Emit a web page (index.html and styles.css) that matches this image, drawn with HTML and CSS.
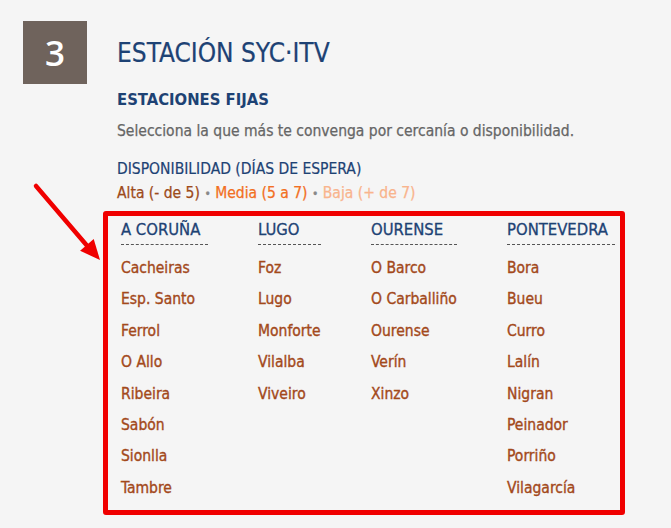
FILE: index.html
```html
<!DOCTYPE html>
<html lang="es">
<head>
<meta charset="utf-8">
<link rel="stylesheet" href="styles.css">
</head>
<body>
<div class="page">
  <div class="step">3</div>
  <div class="content">
    <h1 class="title">ESTACIÓN SYC·ITV</h1>
    <h2 class="subtitle">ESTACIONES FIJAS</h2>
    <p class="lead">Selecciona la que más te convenga por cercanía o disponibilidad.</p>
    <p class="avail-title">DISPONIBILIDAD (DÍAS DE ESPERA)</p>
    <p class="legend"><span class="alta">Alta (- de 5)</span> <span class="dot">•</span> <span class="media">Media (5 a 7)</span> <span class="dot">•</span> <span class="baja">Baja (+ de 7)</span></p>
    <div class="stations">
      <div class="col">
        <div class="head">A CORUÑA</div>
        <ul>
          <li>Cacheiras</li><li>Esp. Santo</li><li>Ferrol</li><li>O Allo</li><li>Ribeira</li><li>Sabón</li><li>Sionlla</li><li>Tambre</li>
        </ul>
      </div>
      <div class="col">
        <div class="head">LUGO</div>
        <ul>
          <li>Foz</li><li>Lugo</li><li>Monforte</li><li>Vilalba</li><li>Viveiro</li>
        </ul>
      </div>
      <div class="col">
        <div class="head">OURENSE</div>
        <ul>
          <li>O Barco</li><li>O Carballiño</li><li>Ourense</li><li>Verín</li><li>Xinzo</li>
        </ul>
      </div>
      <div class="col">
        <div class="head">PONTEVEDRA</div>
        <ul>
          <li>Bora</li><li>Bueu</li><li>Curro</li><li>Lalín</li><li>Nigran</li><li>Peinador</li><li>Porriño</li><li>Vilagarcía</li>
        </ul>
      </div>
      <svg class="arrow" width="80" height="90" viewBox="0 0 80 90">
        <line x1="4" y1="4" x2="57" y2="66" stroke="#f00000" stroke-width="4.5" stroke-linecap="round"/>
        <polygon points="68,78 48.1,68.8 61.7,57" fill="#f00000"/>
      </svg>
    </div>
  </div>
</div>
</body>
</html>
```
FILE: styles.css
```css
html, body {
  margin: 0;
  padding: 0;
  background: #f5f5f5;
}
body {
  font-family: "DejaVu Sans Condensed", "DejaVu Sans", sans-serif;
  width: 671px;
  height: 528px;
  overflow: hidden;
}
.page {
  display: flex;
  padding: 21px 0 0 23px;
  gap: 30px;
}
.step {
  width: 64px;
  height: 63px;
  background: #6f635c;
  color: #fff;
  font-family: "Open Sans", sans-serif;
  font-weight: 600;
  font-size: 35px;
  line-height: 63px;
  text-align: center;
  flex: none;
}
.content {
  flex: 1;
}
.title {
  margin: 16px 0 0;
  font-weight: 400;
  font-size: 26px;
  line-height: 32px;
  color: #1d4274;
  -webkit-text-stroke: 0.2px #1d4274;
}
.subtitle {
  margin: 19px 0 0;
  font-size: 16.5px;
  font-weight: 700;
  line-height: 24px;
  color: #1d4274;
}
.lead {
  margin: 9px 0 0;
  font-size: 15.5px;
  line-height: 20px;
  color: #666;
  -webkit-text-stroke: 0.25px #666;
}
.avail-title {
  margin: 18px 0 0;
  font-size: 15.5px;
  line-height: 20px;
  color: #1d4274;
  -webkit-text-stroke: 0.2px #1d4274;
}
.legend {
  margin: 4px 0 0;
  font-size: 15.5px;
  line-height: 20px;
  -webkit-text-stroke: 0.25px currentColor;
}
.alta { color: #9d4a1a; }
.media { color: #f26f22; }
.baja { color: #f9b48d; }
.dot { color: #888; font-size: 12px; }
.stations {
  position: relative;
  margin: 7px 0 0 -14px;
  width: 499px;
  height: 294px;
  border: 5px solid #f00000;
  border-radius: 3px;
  display: grid;
  grid-template-columns: 137px 113px 136px 1fr;
  padding: 0 0 0 13px;
}
.head {
  color: #1d4274;
  font-size: 16.5px;
  line-height: 20px;
  padding-top: 4px;
  padding-bottom: 4px;
  border-bottom: 1px dashed #555;
  -webkit-text-stroke: 0.3px #1d4274;
}
.col:nth-child(1) .head { width: 87px; }
.col:nth-child(2) .head { width: 63px; }
.col:nth-child(3) .head { width: 86px; }
.col:nth-child(4) .head { width: 108px; }
ul {
  list-style: none;
  margin: 0;
  padding: 8px 0 0;
}
li {
  color: #a3491b;
  font-size: 15.5px;
  line-height: 31.4px;
  -webkit-text-stroke: 0.35px #a3491b;
}
.arrow {
  position: absolute;
  left: -76px;
  top: -34px;
}
```
